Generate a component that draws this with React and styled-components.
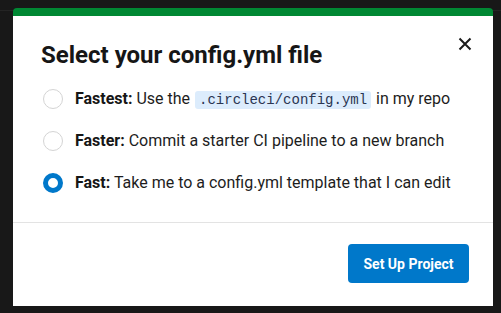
import React, { useState } from "react";
import styled, { createGlobalStyle } from "styled-components";

const GlobalStyle = createGlobalStyle`
  html, body {
    margin: 0;
    padding: 0;
    background: linear-gradient(#181818 0 10px, #242424 10px 11px, #181818 11px);
    font-family: Roboto, "Liberation Sans", sans-serif;
  }
`;

function App() {
  const [selected, setSelected] = useState("fast");

  const options = [
    {
      id: "fastest",
      label: "Fastest:",
      text: (
        <>
          Use the <Code>.circleci/config.yml</Code> in my repo
        </>
      ),
    },
    { id: "faster", label: "Faster:", text: "Commit a starter CI pipeline to a new branch" },
    { id: "fast", label: "Fast:", text: "Take me to a config.yml template that I can edit" },
  ];

  return (
    <>
      <GlobalStyle />
      <Page>
        <Modal>
          <Header>
            <Title>Select your config.yml file</Title>
            <CloseButton aria-label="Close">
              <svg width="14" height="14" viewBox="0 0 14 14">
                <path d="M1.5 1.5 L12.5 12.5 M12.5 1.5 L1.5 12.5" stroke="#1b1b1b" strokeWidth="2" />
              </svg>
            </CloseButton>
          </Header>
          <OptionList>
            {options.map((o) => (
              <Option key={o.id} onClick={() => setSelected(o.id)}>
                <Radio $checked={selected === o.id} />
                <OptionText>
                  <strong>{o.label}</strong> {o.text}
                </OptionText>
              </Option>
            ))}
          </OptionList>
          <Footer>
            <PrimaryButton>Set Up Project</PrimaryButton>
          </Footer>
        </Modal>
      </Page>
    </>
  );
}

const Page = styled.div`
  width: 501px;
  height: 313px;
  padding: 8px 0 0 13px;
  box-sizing: border-box;
`;

const Modal = styled.div`
  width: 480px;
  height: 298px;
  background: #fff;
  border-top: 8px solid #008833;
  border-radius: 4px 4px 0 0;
  box-sizing: border-box;
  display: flex;
  flex-direction: column;
`;

const Header = styled.div`
  display: flex;
  justify-content: space-between;
  align-items: flex-start;
  padding: 20px 24px 0 28px;
`;

const Title = styled.h2`
  margin: 0;
  font-size: 24px;
  font-weight: 700;
  line-height: 30px;
  color: #161616;
  padding-top: 4px;
`;

const CloseButton = styled.button`
  background: transparent;
  border: none;
  padding: 0;
  margin-top: 1px;
  margin-right: -3px;
  width: 14px;
  height: 14px;
  display: flex;
  cursor: pointer;
`;

const OptionList = styled.div`
  display: flex;
  flex-direction: column;
  gap: 22px;
  padding: 19px 28px 29px 30px;
  border-bottom: 1px solid #e3e3e3;
`;

const Option = styled.label`
  display: flex;
  align-items: center;
  gap: 12px;
  height: 20px;
  cursor: pointer;
`;

const Radio = styled.span`
  width: 20px;
  height: 20px;
  border-radius: 50%;
  box-sizing: border-box;
  flex-shrink: 0;
  background: #fff;
  border: ${(p) => (p.$checked ? "5px solid #0078ca" : "1px solid #d4d4d4")};
`;

const OptionText = styled.span`
  font-size: 16px;
  line-height: 20px;
  color: #1d1d1d;
  white-space: nowrap;

  strong {
    font-weight: 700;
    color: #161616;
  }
`;

const Code = styled.code`
  font-family: "Liberation Mono", monospace;
  font-size: 14px;
  font-weight: 300;
  color: #2a3552;
  background: #dcecfc;
  border-radius: 3px;
  padding: 1px 4px;
  margin: 0 1px;
`;

const Footer = styled.div`
  display: flex;
  justify-content: flex-end;
  padding: 21px 24px 0;
`;

const PrimaryButton = styled.button`
  background: #0078ca;
  color: #fff;
  border: none;
  border-radius: 4px;
  width: 121px;
  height: 39px;
  font-family: Roboto, "Liberation Sans", sans-serif;
  font-size: 14px;
  font-weight: 700;
  cursor: pointer;
`;

export default App;
